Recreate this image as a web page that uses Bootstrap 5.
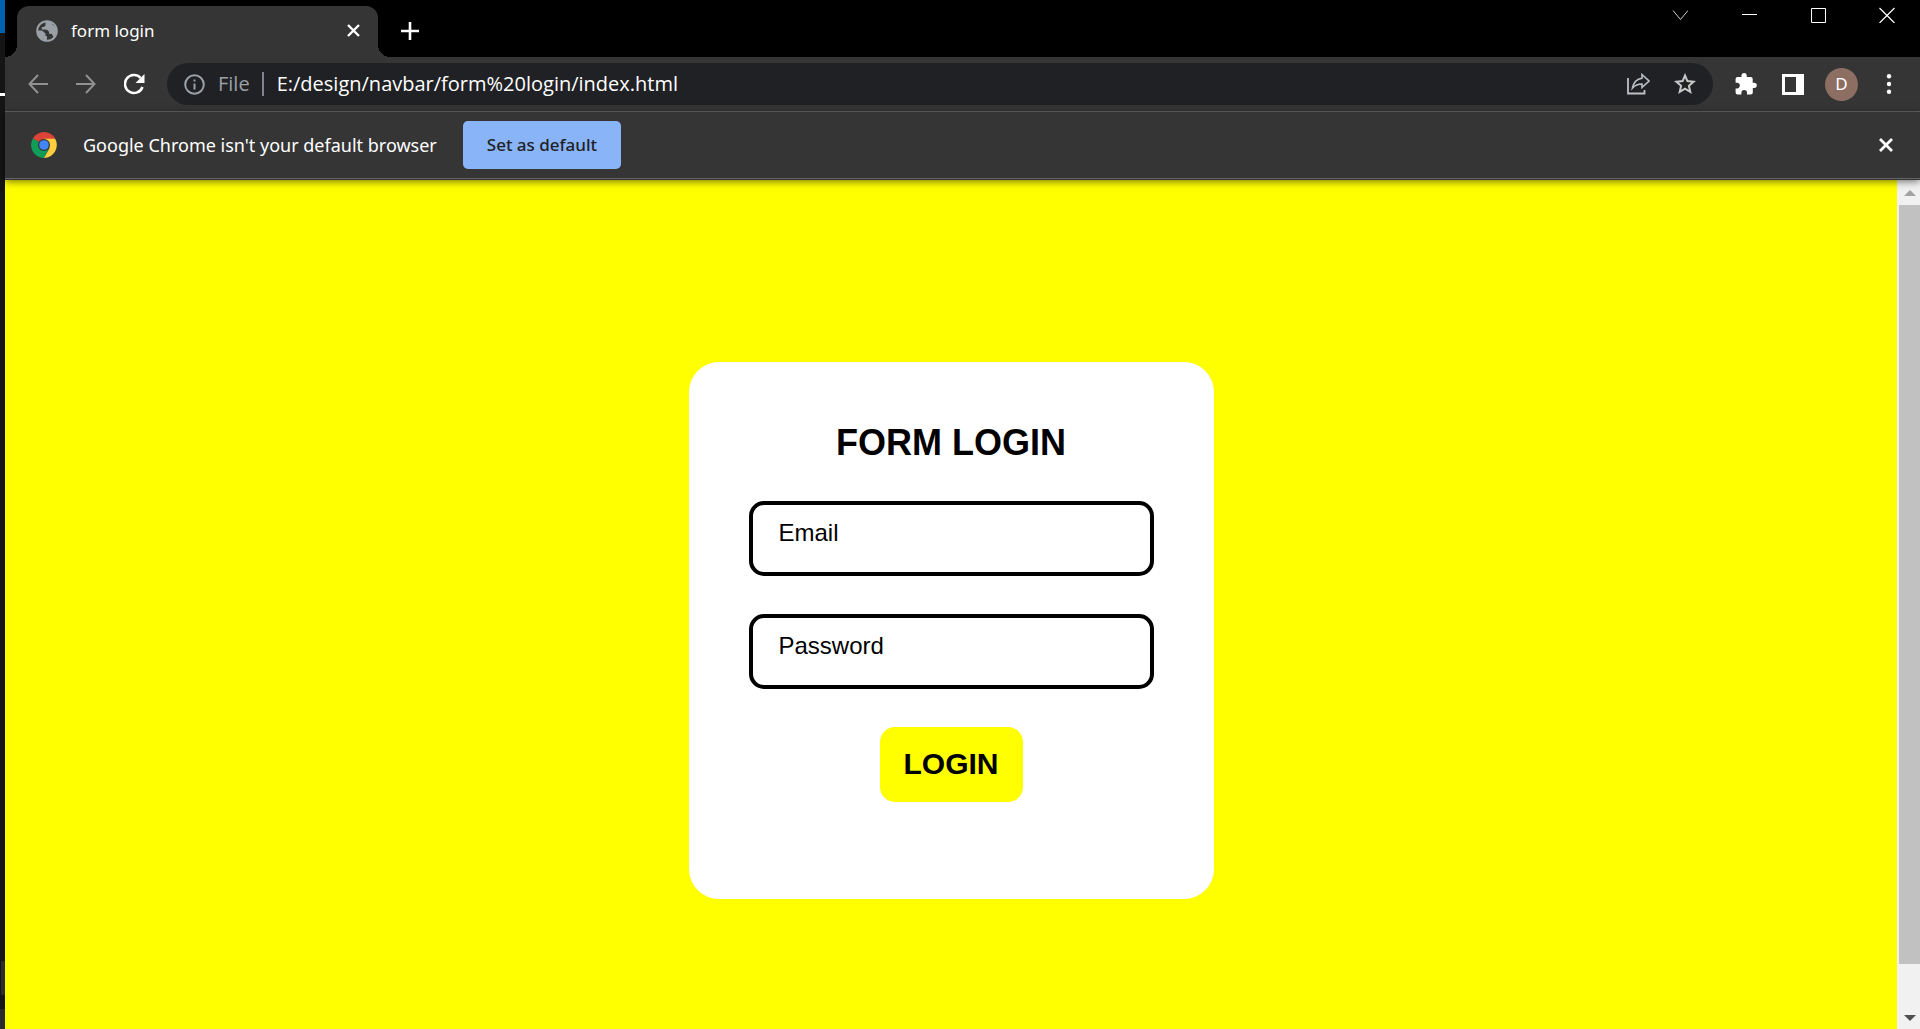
<!DOCTYPE html>
<html lang="en">
<head>
<meta charset="utf-8">
<meta name="viewport" content="width=device-width, initial-scale=1">
<title>form login</title>
<link href="https://cdn.jsdelivr.net/npm/bootstrap@5.3.0/dist/css/bootstrap.min.css" rel="stylesheet">
<style>
  body { font-family: "Noto Sans", "Open Sans", sans-serif; background: #181818; color: #fff; }
  svg { display: block; flex: none; }
  button { border: 0; background: none; padding: 0; color: inherit; }
  .edge-strip { width: 5px; background: #151515; }
  .edge-blue { height: 33px; background: #0063b1; }
  .edge-dark { height: 60px; }
  .edge-mark { height: 3px; background: #fff; }
  .edge-foot { height: 20px; background: #2a2a2a; }
  .edge-tile { height: 34px; margin: 0 0 14px 1px; background: #2c2c2c; }
  .tabstrip { height: 57px; background: #000; padding-left: 12px; }
  .browser-tab { width: 361px; height: 51px; margin-top: 6px; padding: 0 18px 2px 19px; border-radius: 12px 12px 0 0; background: #353535; position: relative; font-size: 17px; }
  .browser-tab::before, .browser-tab::after { content: ""; position: absolute; bottom: 0; width: 12px; height: 12px; }
  .browser-tab::before { left: -12px; background: radial-gradient(circle at 0 0, #000 12px, #353535 12px); }
  .browser-tab::after { right: -12px; background: radial-gradient(circle at 100% 0, #000 12px, #353535 12px); }
  .tab-title { margin-left: 13px; }
  .new-tab { margin: 22px 0 0 23px; }
  .window-buttons { gap: 53px; margin-top: 7px; padding-right: 25px; }
  .toolbar { height: 55px; background: #353535; border-bottom: 1px solid #656565; padding: 0 26px 0 23px; }
  .omnibox { height: 42px; border-radius: 21px; background: #202124; font-family: "Open Sans", "Noto Sans", sans-serif; font-size: 20px; padding: 0 17px; margin: 0 22px; }
  .omnibox-input { background: none; border: 0; color: #fff; padding: 0; outline: 0; min-width: 0; }
  .scheme { color: #9aa0a6; margin-left: 13px; }
  .scheme-rule { width: 2px; height: 24px; background: #80868b; margin: 0 13px 0 12px; }
  .avatar-dot { width: 33px; height: 33px; border-radius: 50%; background: #8d6e63; font-size: 17px; }
  .infobar { height: 67px; background: #353535; border-bottom: 1px solid #656565; box-shadow: 0 1px 0 #353535, 0 2px 8px rgba(0,0,0,.6); padding: 0 27px 0 26px; font-size: 18px; position: relative; z-index: 1; }
  .infobar-text { margin: 0 26px; }
  .default-btn { background: #8ab4f8; color: #202124; border-radius: 5px; height: 48px; padding: 0 24px; font-size: 17px; font-weight: 500; }
  .viewport-area { background: #ff0; padding-top: 53px; }
  .login-card { width: 525px; background: #fff; border-radius: 30px; padding: 60px 60px 97px; color: #000; font-family: "Liberation Sans", Arial, sans-serif; }
  .login-title { font-size: 36px; line-height: 41px; font-weight: 700; margin: 0 0 38px; }
  .field { display: block; width: 100%; height: 75px; border: 4px solid #000; border-radius: 15px; padding: 14px 26px 26px; font-size: 24px; line-height: 27px; color: #000; outline: 0; margin-bottom: 38px; }
  .field::placeholder { color: #000; opacity: 1; }
  .login-btn { display: block; margin: 0 auto; background: #ff0; border-radius: 15px; height: 75px; padding: 0 24px 2px; font-size: 30px; line-height: 34px; font-weight: 700; }
  .scroll-track { width: 23px; background: #f1f1f1; padding: 11px 0 8px 2px; }
  .scroll-thumb { background: #c1c1c1; margin: 9px 0 51px; }
</style>
<script src="https://cdn.jsdelivr.net/npm/bootstrap@5.3.0/dist/js/bootstrap.bundle.min.js"></script>
</head>
<body>
<div class="d-flex vh-100 overflow-hidden">
  <div class="edge-strip d-flex flex-column flex-shrink-0">
    <div class="edge-blue"></div><div class="edge-dark"></div><div class="edge-mark"></div>
    <div class="edge-tile mt-auto"></div><div class="edge-foot"></div>
  </div>
  <div class="d-flex flex-column flex-grow-1">
    <header class="tabstrip d-flex align-items-start">
      <div class="browser-tab d-flex align-items-center">
        <svg width="22" height="22" viewBox="0 0 22 22"><circle cx="11" cy="11" r="9.800" fill="#353535" stroke="#9aa0a6" stroke-width="2"/><path d="M9.500 1.500V5.500L7.800 7H5.800V9.500H11L13 11.500V13.500H16L18 16.500A9.800 9.800 0 0 0 20.500 9.500L17 10.500 13.500 9V6H15.500V3A9.800 9.800 0 0 0 9.500 1.500Z" fill="#9aa0a6"/><path d="M13 1.500 20.500 8V13L17.500 17 15.500 13.500H13V11.500L11 9.500H9V7.500L11 6.500 13 5Z" fill="#9aa0a6"/><path d="M1.500 10.500H6L9.500 13.500V16H11V20.500A9.800 9.800 0 0 1 1.500 10.500Z" fill="#9aa0a6"/></svg>
        <span class="tab-title flex-grow-1">form login</span>
        <button type="button" aria-label="Close tab"><svg width="13" height="13" viewBox="0 0 13 13"><path d="M1 1l11 11M12 1 1 12" stroke="#fff" stroke-width="2.400"/></svg></button>
      </div>
      <button type="button" class="new-tab" aria-label="New tab"><svg width="18" height="18" viewBox="0 0 18 18"><path d="M9 0v18M0 9h18" stroke="#fff" stroke-width="2.600"/></svg></button>
      <div class="window-buttons d-flex ms-auto">
        <button type="button" aria-label="Search tabs"><svg width="16" height="16" viewBox="0 0 16 16"><path d="M1 3.500l7.500 9 7.500-9" fill="none" stroke="#ccc"/></svg></button>
        <button type="button" aria-label="Minimize"><svg width="16" height="16" viewBox="0 0 16 16"><path d="M1 7.500h15" stroke="#fff"/></svg></button>
        <button type="button" aria-label="Maximize"><svg width="16" height="16" viewBox="0 0 16 16"><path d="M1.500 1.500h14v14h-14z" fill="none" stroke="#fff"/></svg></button>
        <button type="button" aria-label="Close"><svg width="16" height="16" viewBox="0 0 16 16"><path d="M.5 1l15 15M15.500 1l-15 15" stroke="#fff" stroke-width="1.200"/></svg></button>
      </div>
    </header>
    <nav class="toolbar d-flex align-items-center">
      <div class="d-flex align-items-center gap-4">
        <button type="button" aria-label="Back"><svg width="20" height="20" viewBox="0 0 20 20"><path d="M20 10H1.500M10 1 1.500 10 10 19" fill="none" stroke="#919191" stroke-width="2"/></svg></button>
        <button type="button" class="ms-1" aria-label="Forward"><svg width="20" height="20" viewBox="0 0 20 20"><path d="M0 10h18.500M10 1l8.500 9-8.500 9" fill="none" stroke="#919191" stroke-width="2"/></svg></button>
        <button type="button" class="ms-1" aria-label="Reload"><svg width="21" height="22" viewBox="1 0 21 22"><path d="M19.500 14A9 9 0 1 1 17.500 4.800" fill="none" stroke="#fff" stroke-width="2.500"/><path d="M21.500 1v9h-9z" fill="#fff"/></svg></button>
      </div>
      <div class="omnibox d-flex align-items-center flex-grow-1">
        <svg width="21" height="21" viewBox="0 0 21 21"><circle cx="10.500" cy="10.500" r="9.300" fill="none" stroke="#9aa0a6" stroke-width="2"/><path d="M9.500 9.500h2v6h-2zM9.500 5.500h2v2h-2z" fill="#9aa0a6"/></svg>
        <label for="address" class="scheme">File</label>
        <span class="scheme-rule"></span>
        <input id="address" class="omnibox-input flex-grow-1" type="text" value="E:/design/navbar/form%20login/index.html">
        <div class="d-flex align-items-center gap-4">
          <button type="button" aria-label="Share"><svg width="23" height="22" viewBox="0 0 23 22"><path d="M1 5V20.500H17.500V17" fill="none" stroke="#bdc1c6" stroke-width="1.800"/><path d="M15 1.500 22 8l-7 6.500v-3.500c-4 0-7 1.200-9.500 4C6.500 9.500 9.500 6 15 5.200Z" fill="none" stroke="#bdc1c6" stroke-width="1.600"/></svg></button>
          <button type="button" aria-label="Bookmark"><svg width="22" height="22" viewBox="0 0 22 22"><path d="M11 2.500L13.400 8.100 19.600 8.700 14.900 12.800 16.300 18.900 11 15.700 5.700 18.900 7.100 12.800 2.400 8.700 8.600 8.100Z" fill="none" stroke="#c7c7c7" stroke-width="2"/></svg></button>
        </div>
      </div>
      <div class="d-flex align-items-center">
        <button type="button" aria-label="Extensions"><svg width="22" height="22" viewBox="0 0 22 22"><path d="M19.200 9.700H17.700V6a2 2 0 0 0-2-2h-4V2.600a2.600 2.600 0 0 0-5.200 0V4H2.600a2 2 0 0 0-2 2v3.800H2a2.800 2.800 0 0 1 0 5.600H.6v4a2 2 0 0 0 2 2h3.800v-1.500a2.800 2.800 0 0 1 5.600 0v1.500h3.800a2 2 0 0 0 2-2v-4.500h1.400a2.600 2.600 0 0 0 0-5.200z" fill="#fff"/></svg></button>
        <button type="button" class="ms-4 me-3" aria-label="Side panel"><svg width="24" height="21" viewBox="0 0 24 21"><path fill-rule="evenodd" d="M1 0h22v21H1zM4 3v15h11V3z" fill="#fff"/></svg></button>
        <button type="button" class="avatar-dot ms-1" aria-label="Profile">D</button>
        <button type="button" class="ms-4" aria-label="Menu"><svg width="12" height="20" viewBox="0 0 12 20"><g fill="#fff"><circle cx="7" cy="2.200" r="2.200"/><circle cx="7" cy="10" r="2.200"/><circle cx="7" cy="17.800" r="2.200"/></g></svg></button>
      </div>
    </nav>
    <div class="infobar d-flex align-items-center">
      <svg width="26" height="26" viewBox="0 0 26 26"><path d="M13 13 1.900 6.500A12.900 12.900 0 0 1 24.200 6.500Z" fill="#db4437"/><path d="M13 13 1.900 6.500A12.900 12.900 0 0 0 13 25.900l5.200-9.900Z" fill="#0f9d58"/><path d="M13 6.700h11.200A12.900 12.900 0 0 1 13 25.900l5.500-9.700Z" fill="#ffcd40"/><circle cx="13" cy="13" r="6" fill="#353535"/><circle cx="13" cy="13" r="4.800" fill="#4285f4"/></svg>
      <span class="infobar-text">Google Chrome isn't your default browser</span>
      <button type="button" class="default-btn">Set as default</button>
      <button type="button" class="ms-auto" aria-label="Dismiss"><svg width="14" height="14" viewBox="0 0 14 14"><path d="M1 1l12 12M13 1 1 13" stroke="#fff" stroke-width="2.800"/></svg></button>
    </div>
    <div class="d-flex flex-grow-1">
      <main class="viewport-area d-flex flex-grow-1 align-items-center justify-content-center">
        <form class="login-card text-center">
          <h1 class="login-title">FORM LOGIN</h1>
          <input class="field" type="email" placeholder="Email" aria-label="Email">
          <input class="field" type="password" placeholder="Password" aria-label="Password">
          <button type="button" class="login-btn">LOGIN</button>
        </form>
      </main>
      <div class="scroll-track d-flex flex-column align-items-stretch">
        <svg class="mx-auto" width="12" height="6" viewBox="0 0 12 6"><path d="M6 0l6 6H0z" fill="#a3a3a3"/></svg>
        <div class="scroll-thumb flex-grow-1"></div>
        <svg class="mx-auto" width="12" height="6" viewBox="0 0 12 6"><path d="M0 0h12L6 6z" fill="#505050"/></svg>
      </div>
    </div>
  </div>
</div>
</body>
</html>
